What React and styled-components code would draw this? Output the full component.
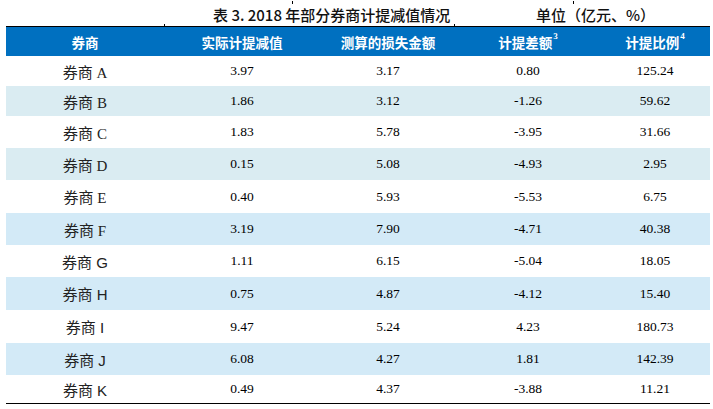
import React from "react";
import styled, { createGlobalStyle } from "styled-components";

const GlobalStyle = createGlobalStyle`
  html, body {
    margin: 0;
    padding: 0;
    background: #ffffff;
  }
`;

const cols = "158px 156px 136px 144px 110px";

const Page = styled.div`
  width: 713px;
  height: 409px;
  padding-left: 6px;
  box-sizing: border-box;
  background: #fff;
`;

const TitleRow = styled.div`
  display: grid;
  grid-template-columns: 159px 128px 162px 119px 136px;
  width: 704px;
  height: 27px;
  border-bottom: 1.5px solid #000;
  box-sizing: border-box;
  font-family: "Noto Sans CJK SC", "Liberation Sans", sans-serif;
  font-size: 15px;
  font-weight: 500;
  color: #111;
`;

const TitleCell = styled.div`
  position: relative;
  grid-column: ${(p) => p.$span || "auto"};
  padding-left: ${(p) => p.$indent || 0}px;
  display: flex;
  align-items: center;
  white-space: nowrap;
  &::before {
    content: "";
    position: absolute;
    left: -1px;
    bottom: -1px;
    width: 1px;
    height: 3px;
    background: #000;
    display: ${(p) => (p.$tick ? "block" : "none")};
  }
`;

const Tick = styled.div`
  position: relative;
  &::before {
    content: "";
    position: absolute;
    left: -1px;
    bottom: -1px;
    width: 1px;
    height: 3px;
    background: #000;
  }
`;

const Table = styled.div`
  width: 704px;
  border-bottom: 1.5px solid #000;
`;

const HeadRow = styled.div`
  display: grid;
  grid-template-columns: ${cols};
  height: 29px;
  background: #0070c0;
  color: #fff;
  font-family: "Noto Sans CJK SC", "Liberation Sans", sans-serif;
  font-size: 13.5px;
  font-weight: 700;
`;

const HeadCell = styled.div`
  display: flex;
  align-items: center;
  justify-content: center;
  white-space: nowrap;
`;

const Sup = styled.span`
  font-size: 9px;
  font-weight: 700;
  font-family: "Liberation Serif", serif;
  align-self: flex-start;
  margin-top: 5px;
  margin-left: 1px;
  line-height: 1;
`;

const Row = styled.div`
  display: grid;
  grid-template-columns: ${cols};
  height: ${(p) => p.$h}px;
  background: ${(p) => p.$bg};
  color: #000;
`;

const Cell = styled.div`
  display: flex;
  align-items: center;
  justify-content: center;
  font-family: "Liberation Serif", serif;
  font-size: 13.5px;
`;

const Name = styled(Cell)`
  font-family: ${(p) =>
    p.$sans
      ? `"Liberation Sans", "Noto Sans CJK SC", sans-serif`
      : `"Liberation Serif", "Noto Sans CJK SC", serif`};
  font-size: 15px;
  color: #222;
`;

const rows = [
  ["A", "3.97", "3.17", "0.80", "125.24", 30],
  ["B", "1.86", "3.12", "-1.26", "59.62", 30],
  ["C", "1.83", "5.78", "-3.95", "31.66", 32],
  ["D", "0.15", "5.08", "-4.93", "2.95", 32],
  ["E", "0.40", "5.93", "-5.53", "6.75", 33],
  ["F", "3.19", "7.90", "-4.71", "40.38", 32],
  ["G", "1.11", "6.15", "-5.04", "18.05", 32],
  ["H", "0.75", "4.87", "-4.12", "15.40", 33],
  ["I", "9.47", "5.24", "4.23", "180.73", 33],
  ["J", "6.08", "4.27", "1.81", "142.39", 32],
  ["K", "0.49", "4.37", "-3.88", "11.21", 28],
];

const shade = (i) => {
  if (i % 2 === 0) return "#ffffff";
  return i < 4 ? "#daecf2" : "#d3eaf7";
};

const App = () => {
  return (
    <Page>
      <GlobalStyle />
      <TitleRow>
        <div />
        <TitleCell $span="2 / 4" $indent={48} $tick>
          表 3. 2018 年部分券商计提减值情况
        </TitleCell>
        <Tick style={{ gridColumn: "3 / 4", gridRow: 1 }} />
        <TitleCell $span="4 / 6" $indent={81} $tick>
          单位（亿元、%）
        </TitleCell>
        <Tick style={{ gridColumn: "5 / 6", gridRow: 1 }} />
      </TitleRow>
      <Table>
        <HeadRow>
          <HeadCell>券商</HeadCell>
          <HeadCell>实际计提减值</HeadCell>
          <HeadCell>测算的损失金额</HeadCell>
          <HeadCell>
            计提差额<Sup>3</Sup>
          </HeadCell>
          <HeadCell>
            计提比例<Sup>4</Sup>
          </HeadCell>
        </HeadRow>
        {rows.map(([name, a, b, c, d, h], i) => (
          <Row key={name} $h={h} $bg={shade(i)}>
            <Name $sans={i >= 6}>券商 {name}</Name>
            <Cell>{a}</Cell>
            <Cell>{b}</Cell>
            <Cell>{c}</Cell>
            <Cell>{d}</Cell>
          </Row>
        ))}
      </Table>
    </Page>
  );
};

export default App;
